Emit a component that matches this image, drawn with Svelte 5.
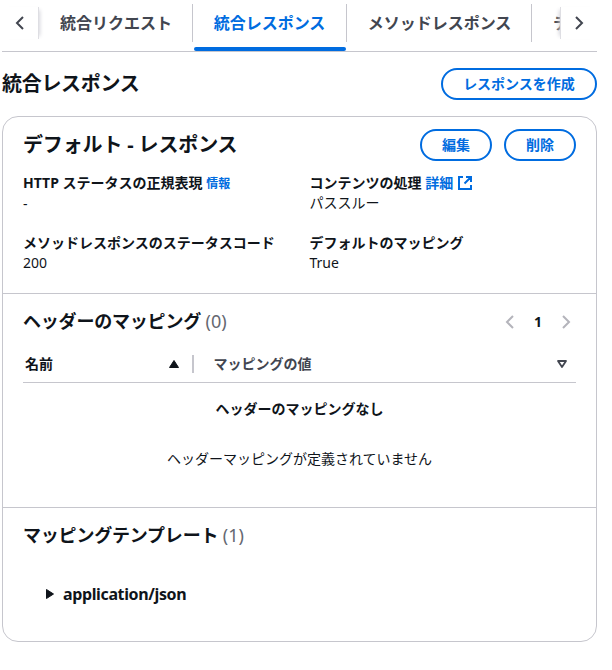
<script>
  const tabs = [
    { label: '統合リクエスト', width: 154 },
    { label: '統合レスポンス', width: 154, active: true },
    { label: 'メソッドレスポンス', width: 185 },
    { label: 'テスト', width: 90 }
  ];
</script>

{#snippet chevron(left, w)}
  <svg width="16" height="16" viewBox="0 0 16 16" fill="none" stroke="currentColor" stroke-width={w}>
    <path d={left ? 'M11 2 5 8l6 6' : 'M5 2l6 6-6 6'} />
  </svg>
{/snippet}

<main>
  <nav>
    <button class="scroll left" aria-label="前へ">{@render chevron(true, 2)}</button>
    <div class="tabs">
      {#each tabs as tab}
        <div class="tab" class:active={tab.active} style="width:{tab.width}px"><span>{tab.label}</span></div>
      {/each}
    </div>
    <button class="scroll right" aria-label="次へ">{@render chevron(false, 2)}</button>
  </nav>

  <header class="page">
    <h1>統合レスポンス</h1>
    <button class="btn wide">レスポンスを作成</button>
  </header>

  <div class="card">
    <section class="details">
      <div class="head">
        <h2>デフォルト - レスポンス</h2>
        <div class="actions"><button class="btn">編集</button><button class="btn">削除</button></div>
      </div>
      <dl>
        <div><dt>HTTP ステータスの正規表現 <a class="info">情報</a></dt><dd>-</dd></div>
        <div>
          <dt>コンテンツの処理 <a>詳細
            <svg class="ext" width="14" height="14" viewBox="0 0 14 14" fill="none" stroke="currentColor" stroke-width="2"><path d="M5 1H1v12h12V9M8 1h5v5M13 1 6.5 7.5" /></svg></a></dt>
          <dd>パススルー</dd>
        </div>
        <div><dt>メソッドレスポンスのステータスコード</dt><dd>200</dd></div>
        <div><dt>デフォルトのマッピング</dt><dd>True</dd></div>
      </dl>
    </section>

    <section class="mapping">
      <div class="subhead">
        <h3>ヘッダーのマッピング <span>(0)</span></h3>
        <div class="pager">{@render chevron(true, 2)}<b>1</b>{@render chevron(false, 2)}</div>
      </div>
      <div class="thead">
        <div class="th name">名前
          <svg width="12" height="10" viewBox="0 0 12 10"><path d="M6 1.5 10.5 8.5h-9z" fill="currentColor" stroke="currentColor" stroke-linejoin="round" /></svg>
        </div>
        <div class="th value">マッピングの値
          <svg width="12" height="10" viewBox="0 0 12 10" fill="none" stroke="currentColor" stroke-width="1.8" stroke-linejoin="round"><path d="M2 2h8L6 8z" /></svg>
        </div>
      </div>
      <p class="empty"><b>ヘッダーのマッピングなし</b></p>
      <p class="note">ヘッダーマッピングが定義されていません</p>
    </section>

    <section class="templates">
      <h3>マッピングテンプレート <span>(1)</span></h3>
      <div class="expander">
        <svg width="10" height="12" viewBox="0 0 10 12"><path d="M1.5 1.5 8.5 6l-7 4.5z" fill="currentColor" stroke="currentColor" stroke-linejoin="round" /></svg>
        <span>application/json</span>
      </div>
    </section>
  </div>
</main>

<style>
  :global(body) { background: #fff; }
  main {
    box-sizing: border-box;
    width: 612px;
    height: 670px;
    padding: 0 15px 0 2px;
    overflow: hidden;
    font: 14px/20px "Noto Sans", "Noto Sans CJK JP", sans-serif;
    color: #0f141a;
  }
  h1, h2, h3, p, dl, dd { margin: 0; }
  button { font: inherit; padding: 0; background: #fff; }
  svg { display: block; flex: none; }

  nav { display: flex; height: 51px; border-bottom: 1px solid #c6c6cd; }
  .scroll {
    flex: none;
    display: flex;
    align-items: center;
    justify-content: center;
    box-sizing: border-box;
    width: 37px;
    height: 32px;
    margin-top: 7px;
    border: 0;
    color: #424650;
    z-index: 1;
  }
  .left { border-right: 1px solid #dedee3; box-shadow: 4px 0 4px -3px #d6d6dc; }
  .right { border-left: 1px solid #dedee3; box-shadow: -4px 0 4px -3px #d6d6dc; }
  .tabs { display: flex; flex: 1; min-width: 0; overflow: hidden; }
  .tab {
    position: relative;
    flex: none;
    box-sizing: border-box;
    height: 51px;
    padding-top: 12px;
    font-size: 16px;
    line-height: 22px;
    font-weight: 700;
    text-align: center;
    color: #424650;
  }
  .tab::before { content: ""; position: absolute; right: 0; top: 4px; width: 1px; height: 38px; background: #c6c6cd; }
  .tab.active { color: #006ce0; padding-right: 1px; }
  .tab.active::after { content: ""; position: absolute; left: 1px; right: 1px; bottom: 0; height: 4px; border-radius: 2px; background: #006ce0; }

  .page { display: flex; justify-content: space-between; height: 64px; }
  h1, h2 { font-size: 20px; line-height: 24px; }
  h1 { margin-top: 20px; letter-spacing: -0.3px; }
  .btn {
    box-sizing: border-box;
    width: 72px;
    height: 32px;
    border: 2px solid #006ce0;
    border-radius: 16px;
    color: #006ce0;
    font-weight: 700;
    line-height: 20px;
  }
  .wide { width: 156px; margin-top: 16px; }

  .card { box-sizing: border-box; height: 526px; border: 1px solid #c6c6cd; border-radius: 16px; }
  section { box-sizing: border-box; padding: 0 20px; }
  .details { height: 177px; border-bottom: 1px solid #c6c6cd; padding-top: 12px; }
  .head, .subhead { display: flex; justify-content: space-between; }
  h2 { margin-top: 4px; letter-spacing: -0.15px; }
  .actions { display: flex; gap: 12px; }
  dl { display: grid; grid-template-columns: 286.5px 1fr; grid-auto-rows: 40px; row-gap: 20px; margin-top: 12px; }
  dt { font-weight: 700; white-space: nowrap; }
  a { color: #006ce0; }
  .info { font-size: 12px; }
  .ext { display: inline-block; vertical-align: -2px; margin-left: 1px; }

  .mapping { height: 214px; border-bottom: 1px solid #c6c6cd; padding-top: 16px; }
  h3 { font-size: 18px; line-height: 22px; letter-spacing: -0.2px; }
  h3 span { font-weight: 400; color: #656871; letter-spacing: 0; }
  .pager { display: flex; align-items: center; gap: 16px; margin-right: 2px; padding-top: 1px; color: #b4b4bb; }
  .pager b { width: 8px; color: #0f141a; text-align: center; }
  .thead { display: flex; align-items: center; height: 36px; margin-top: 14px; border-bottom: 1px solid #c6c6cd; font-weight: 700; }
  .th { display: flex; align-items: center; justify-content: space-between; box-sizing: border-box; height: 18px; }
  .name { width: 171px; padding: 0 12px 0 2px; border-right: 2px solid #c6c6cd; }
  .value { flex: 1; padding: 0 8px 0 19.5px; color: #424650; }
  p { text-align: center; }
  .empty { margin-top: 16px; }
  .note { margin-top: 30px; }

  .templates { padding-top: 16px; }
  .expander { display: flex; align-items: center; gap: 8px; margin: 37px 0 0 22px; font-size: 16px; line-height: 22px; font-weight: 700; letter-spacing: -0.37px; }
</style>
